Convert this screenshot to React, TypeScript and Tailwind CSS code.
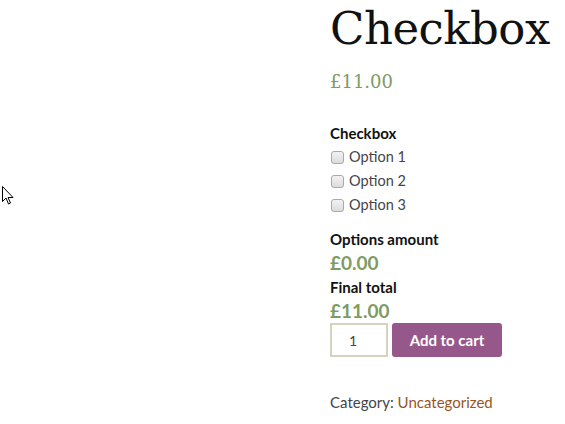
const body = { fontFamily: 'Lato, "Noto Sans", sans-serif' };
const serif = { fontFamily: '"DejaVu Serif", "Liberation Serif", serif' };

function Box({ label }: { label: string }) {
  return (
    <label className="flex items-center h-6 text-[14.5px] text-[#43454b]">
      <span className="inline-block w-[13px] h-[13px] ml-[1px] mr-[5px] rounded-[3px] border border-[#a9a9a9] bg-gradient-to-b from-[#f2f2f2] to-[#dcdcdc]" />
      {label}
    </label>
  );
}

export default function App() {
  return (
    <div className="relative w-[565px] h-[424px] bg-white overflow-hidden" style={body}>
      <svg className="absolute left-[2px] top-[186px]" width="12" height="19" viewBox="0 0 12 19">
        <path d="M0.5 0.5 L0.5 15.5 L4 12 L6.5 18 L8.5 17 L6 11.5 L11 11.5 Z" fill="#fff" stroke="#000" strokeWidth="1" />
      </svg>
      <div className="ml-[330px] flex flex-col">
        <h1 className="text-[45px] leading-none mt-[6px] text-[#111] tracking-[-0.5px]" style={serif}>Checkbox</h1>
        <div className="text-[18px] text-[#7e9b62] mt-[17px]" style={serif}>£11.00</div>
        <div className="mt-[26px] font-bold text-[15px] text-[#111] leading-6">Checkbox</div>
        <Box label="Option 1" />
        <Box label="Option 2" />
        <Box label="Option 3" />
        <div className="mt-[10px] font-bold text-[15px] text-[#111] leading-6">Options amount</div>
        <div className="font-bold text-[19px] text-[#7e9b62] leading-6">£0.00</div>
        <div className="font-bold text-[15px] text-[#111] leading-6">Final total</div>
        <div className="font-bold text-[19px] text-[#7e9b62] leading-6">£11.00</div>
        <div className="flex gap-[4px]">
          <div className="w-[58px] h-[34px] border-2 border-[#d6d3bd] flex items-center pl-[17px] text-[14px] text-[#43454b]">1</div>
          <button className="w-[110px] h-[34px] bg-[#96588a] rounded-[3px] text-white font-bold text-[15px]">Add to cart</button>
        </div>
        <div className="mt-[34px] text-[15px] text-[#43454b]">
          Category: <span className="text-[#96561f]">Uncategorized</span>
        </div>
      </div>
    </div>
  );
}
